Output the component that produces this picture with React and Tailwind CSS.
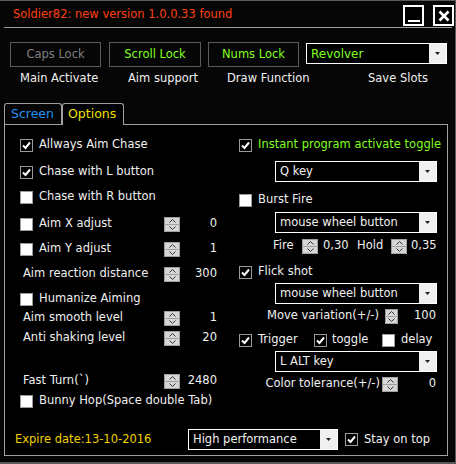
import React from "react";

const Check = ({ checked }) =>
  checked ? (
    <div className="w-[13px] h-[13px] border border-[#9a9a9a] bg-black flex items-center justify-center shrink-0">
      <svg width="9" height="9" viewBox="0 0 9 9">
        <path d="M1 4.5 L3.5 7 L8 1.5" stroke="#fff" strokeWidth="2" fill="none" />
      </svg>
    </div>
  ) : (
    <div className="w-[13px] h-[13px] border border-[#9a9a9a] bg-white shrink-0" />
  );

const Spin = ({ className = "w-4" }) => (
  <div className={`h-[15px] flex flex-col shrink-0 ${className}`}>
    <div className="flex-1 bg-[#d6d6d6] border border-[#a0a0a0] flex items-center justify-center">
      <svg width="7" height="4" viewBox="0 0 7 4">
        <path d="M0.5 3.5 L3.5 0.5 L6.5 3.5" stroke="#333" fill="none" />
      </svg>
    </div>
    <div className="flex-1 bg-[#d6d6d6] border border-[#a0a0a0] border-t-0 flex items-center justify-center">
      <svg width="7" height="4" viewBox="0 0 7 4">
        <path d="M0.5 0.5 L3.5 3.5 L6.5 0.5" stroke="#333" fill="none" />
      </svg>
    </div>
  </div>
);

const Drop = ({ text, className = "", textClass = "text-[#f0f0f0]" }) => (
  <div className={`flex h-[21px] border border-white bg-black ${className}`}>
    <span className={`flex-1 pl-[4px] flex items-center whitespace-nowrap ${textClass}`}>{text}</span>
    <div className="w-[17px] bg-[#f0f0f0] flex items-center justify-center">
      <svg width="5" height="3" viewBox="0 0 5 3">
        <path d="M0 0h5L2.5 3z" fill="#222" />
      </svg>
    </div>
  </div>
);

// left column row: checkbox/label area, spinner, value
const Row = ({ children, className = "", spin, value }) => (
  <div className={`h-5 flex items-center whitespace-nowrap ${className}`}>
    <div className="w-[159px] pl-[15px] flex items-center gap-[6px]">{children}</div>
    {spin && <Spin />}
    {spin && <span className="w-[37px] text-right">{value}</span>}
  </div>
);

export default function App() {
  return (
    <div className="w-[456px] h-[464px] bg-[#060606] border-t border-r border-b-2 border-[#5a5a5a] flex flex-col font-['DejaVu_Sans',sans-serif] text-[11.5px] leading-none text-[#f0f0f0] overflow-hidden whitespace-nowrap">
      {/* title bar */}
      <div className="h-[26px] flex items-center">
        <span className="pl-[13px] pt-[1px] text-[#ff4010] flex-1">Soldier82: new version 1.0.0.33 found</span>
        <div className="flex gap-[9px] pr-px pt-[4px] self-start">
          <div className="w-[21px] h-[21px] border-2 border-white bg-black flex items-end justify-center pb-[2px]">
            <div className="w-[12px] h-[2px] bg-white" />
          </div>
          <div className="w-[21px] h-[21px] border-2 border-white bg-black flex items-center justify-center">
            <svg width="12" height="12" viewBox="0 0 12 12">
              <path d="M1.5 1.5 L10.5 10.5 M10.5 1.5 L1.5 10.5" stroke="#fff" strokeWidth="2.6" />
            </svg>
          </div>
        </div>
      </div>
      <div className="mx-[4px] w-[448px] h-px bg-[#9a9a9a]" />

      {/* key buttons */}
      <div className="mt-[14px] pl-[10px] flex items-start">
        <div className="w-[91px] h-[25px] border border-[#5a5a5a] flex items-center justify-center text-[#808080]">Caps Lock</div>
        <div className="ml-[8px] w-[92px] h-[25px] border border-[#5a5a5a] flex items-center justify-center text-[#80ff20]">Scroll Lock</div>
        <div className="ml-[7px] w-[91px] h-[25px] border border-[#5a5a5a] flex items-center justify-center text-[#80ff20]">Nums Lock</div>
        <Drop text="Revolver" className="ml-[7px] mt-px w-[141px]" textClass="text-[#80ff20] text-[12px]" />
      </div>
      <div className="mt-[5px] pl-[20px] flex h-[14px] items-center">
        <span className="w-[108px]">Main Activate</span>
        <span className="w-[99px]">Aim support</span>
        <span className="w-[141px]">Draw Function</span>
        <span>Save Slots</span>
      </div>

      {/* tabs */}
      <div className="mt-[16px] pl-[4px] flex items-end h-[22px] text-[12.5px]">
        <div className="w-[58px] h-[21px] border border-b-0 border-[#a0a0a0] rounded-t-[3px] flex items-center pl-[6px] text-[#2090f0]">Screen</div>
        <div className="w-[62px] h-[22px] border border-b-0 border-[#a0a0a0] rounded-t-[3px] flex items-center pl-[5px] text-[#f0e000] bg-black relative top-px">Options</div>
      </div>

      {/* panel */}
      <div className="ml-[4px] w-[444px] h-[332px] border border-[#a0a0a0] bg-black flex flex-col">
        <div className="flex h-[286px]">
          {/* left column */}
          <div className="w-[225px] flex flex-col pt-[10px]">
            <Row><Check checked /><span>Allways Aim Chase</span></Row>
            <Row className="mt-[7px]"><Check checked /><span>Chase with L button</span></Row>
            <Row className="mt-[5px]"><Check /><span>Chase with R button</span></Row>
            <Row className="mt-[7px]" spin value="0"><Check /><span>Aim X adjust</span></Row>
            <Row className="mt-[5px]" spin value="1"><Check /><span>Aim Y adjust</span></Row>
            <Row className="mt-[5px]" spin value="300"><span className="pl-[3px]">Aim reaction distance</span></Row>
            <Row className="mt-[5px]"><Check /><span>Humanize Aiming</span></Row>
            <Row className="-mt-px" spin value="1"><span className="pl-[3px]">Aim smooth level</span></Row>
            <Row spin value="20"><span className="pl-[3px]">Anti shaking level</span></Row>
            <Row className="mt-[23px]" spin value="2480"><span className="pl-[3px]">Fast Turn(`)</span></Row>
            <Row><Check /><span>Bunny Hop(Space double Tab)</span></Row>
          </div>

          {/* right column */}
          <div className="flex-1 flex flex-col pt-[10px]">
            <div className="h-5 flex items-center gap-[6px] pl-[9px]">
              <Check checked />
              <span className="text-[#80ff20]">Instant program activate toggle</span>
            </div>
            <Drop text="Q key" className="mt-[6px] ml-[45px] w-[162px]" />
            <div className="mt-[8px] h-5 flex items-center gap-[6px] pl-[9px]">
              <Check />
              <span>Burst Fire</span>
            </div>
            <Drop text="mouse wheel button" className="mt-[2px] ml-[45px] w-[162px]" />
            <div className="mt-[3px] h-5 flex items-center pl-[43px]">
              <span className="w-[29px]">Fire</span>
              <Spin />
              <span className="ml-[5px] w-[34px]">0,30</span>
              <span className="w-[34px]">Hold</span>
              <Spin />
              <span className="ml-[4px]">0,35</span>
            </div>
            <div className="mt-[6px] h-5 flex items-center gap-[6px] pl-[9px]">
              <Check checked />
              <span>Flick shot</span>
            </div>
            <Drop text="mouse wheel button" className="mt-px ml-[45px] w-[162px]" />
            <div className="mt-[2px] h-5 flex items-center justify-end pr-[11px]">
              <span>Move variation(+/-)</span>
              <Spin className="ml-[6px] w-[13px]" />
              <span className="w-[38px] text-right">100</span>
            </div>
            <div className="mt-[4px] h-5 flex items-center pl-[9px]">
              <div className="w-[75px] flex items-center gap-[6px]"><Check checked /><span>Trigger</span></div>
              <div className="w-[68px] flex items-center gap-[5px]"><Check checked /><span>toggle</span></div>
              <div className="flex items-center gap-[6px]"><Check /><span>delay</span></div>
            </div>
            <Drop text="L ALT key" className="mt-px ml-[45px] w-[162px]" />
            <div className="mt-[2px] h-5 flex items-center justify-end pr-[11px]">
              <span>Color tolerance(+/-)</span>
              <Spin className="ml-[2px] w-4" />
              <span className="w-[38px] text-right">0</span>
            </div>
          </div>
        </div>

        {/* bottom row */}
        <div className="mt-[18px] h-[21px] flex items-center">
          <span className="pl-[10px] w-[183px] text-[#f0d000]">Expire date:13-10-2016</span>
          <Drop text="High performance" className="w-[150px]" />
          <div className="ml-[7px] flex items-center gap-[6px]">
            <Check checked />
            <span>Stay on top</span>
          </div>
        </div>
      </div>
    </div>
  );
}
